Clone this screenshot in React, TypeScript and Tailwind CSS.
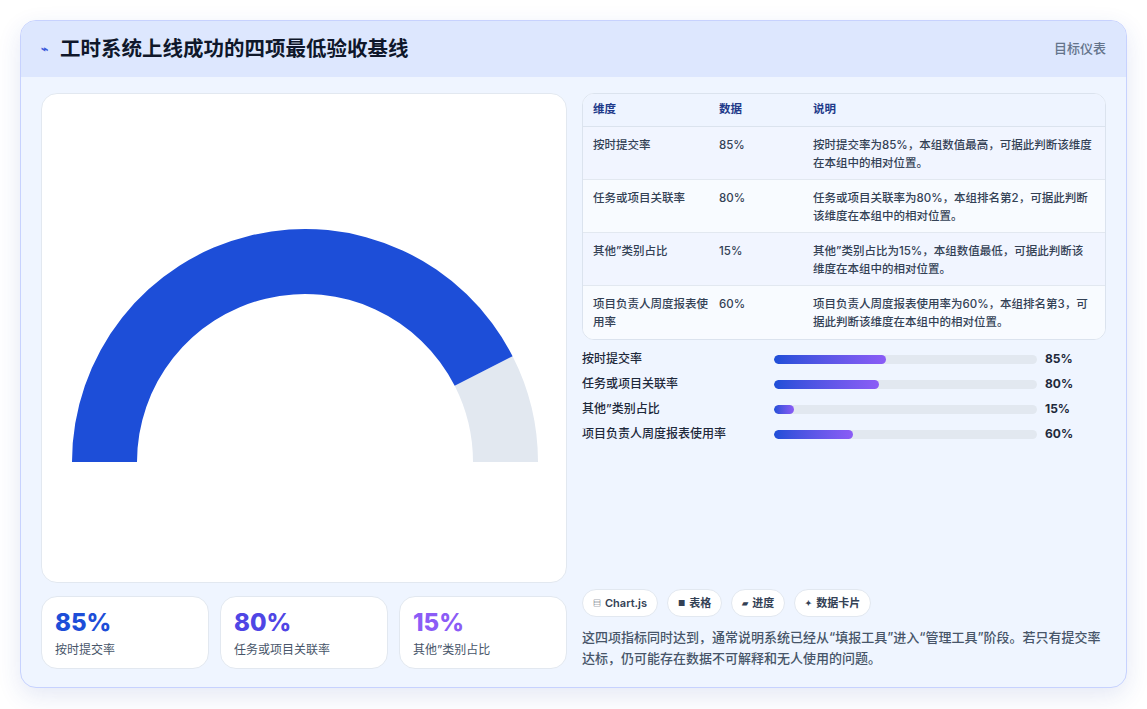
import React from "react";

const rows = [
  ["按时提交率", "85%", "按时提交率为85%，本组数值最高，可据此判断该维度在本组中的相对位置。"],
  ["任务或项目关联率", "80%", "任务或项目关联率为80%，本组排名第2，可据此判断该维度在本组中的相对位置。"],
  ["其他”类别占比", "15%", "其他”类别占比为15%，本组数值最低，可据此判断该维度在本组中的相对位置。"],
  ["项目负责人周度报表使用率", "60%", "项目负责人周度报表使用率为60%，本组排名第3，可据此判断该维度在本组中的相对位置。"],
];
const bars: [string, number][] = [
  ["按时提交率", 85],
  ["任务或项目关联率", 80],
  ["其他”类别占比", 15],
  ["项目负责人周度报表使用率", 60],
];

function Gauge() {
  const cx = 263, cy = 368, R = 233, r = 168;
  const pt = (rad: number, f: number) => {
    const a = Math.PI - f * Math.PI;
    return [cx + rad * Math.cos(a), cy - rad * Math.sin(a)];
  };
  const arc = (f0: number, f1: number) => {
    const [x0, y0] = pt(R, f0), [x1, y1] = pt(R, f1), [x2, y2] = pt(r, f1), [x3, y3] = pt(r, f0);
    return `M${x0} ${y0} A${R} ${R} 0 0 1 ${x1} ${y1} L${x2} ${y2} A${r} ${r} 0 0 0 ${x3} ${y3} Z`;
  };
  return (
    <svg width="526" height="488" viewBox="0 0 526 488">
      <path d={arc(0.85, 1)} fill="#e2e8f0" />
      <path d={arc(0, 0.85)} fill="#1d4ed8" />
    </svg>
  );
}

export default function App() {
  return (
    <div className="w-[1147px] h-[709px] bg-white p-5" style={{ fontFamily: "Inter, 'Noto Sans CJK SC', sans-serif" }}>
      <div className="h-[668px] rounded-2xl border border-[#c7d2fe] bg-[#eff5ff] shadow-[0_8px_24px_rgba(30,64,175,0.12)] overflow-hidden flex flex-col">
        <div className="h-[56px] shrink-0 bg-[#dde7fe] flex items-center justify-between px-5">
          <div className="flex items-center gap-3">
            <span className="text-[#3b5bdb] text-[12px] font-bold">⌁</span>
            <span className="text-[20.5px] font-bold text-[#0f172a]">工时系统上线成功的四项最低验收基线</span>
          </div>
          <span className="text-[13px] text-[#64748b] font-medium">目标仪表</span>
        </div>
        <div className="flex-1 flex gap-[15px] px-5 pt-4 pb-5">
          <div className="w-[526px] flex flex-col gap-[13px]">
            <div className="h-[490px] rounded-2xl bg-white border border-[#e2e8f0]">
              <Gauge />
            </div>
            <div className="flex gap-[11px]">
              {[["85%", "text-[#1d4ed8]", "按时提交率"], ["80%", "text-[#4f46e5]", "任务或项目关联率"], ["15%", "text-[#8b5cf6]", "其他”类别占比"]].map(([v, c, l]) => (
                <div key={v} className="flex-1 h-[73px] rounded-2xl bg-white border border-[#e2e8f0] px-[13px] pt-[10px]">
                  <div className={`text-[24px] font-extrabold leading-[32px] ${c}`}>{v}</div>
                  <div className="text-[12px] text-[#475569] mt-[2px]">{l}</div>
                </div>
              ))}
            </div>
          </div>
          <div className="flex-1 flex flex-col justify-between">
            <div>
              <div className="rounded-xl border border-[#dbe3ee] overflow-hidden bg-white text-[11.5px]">
                <div className="flex h-[33px] items-center bg-[#eef4ff] text-[#1e3a8a] font-bold border-b border-[#dbe3ee]">
                  <div className="w-[136px] pl-[10px]">维度</div>
                  <div className="w-[94px]">数据</div>
                  <div className="flex-1">说明</div>
                </div>
                {rows.map((r, i) => (
                  <div key={i} className={`flex h-[53px] pt-[9px] font-medium text-[#334155] leading-[18px] ${i < 3 ? "border-b border-[#e2e8f0]" : ""} ${i % 2 === 0 ? "bg-[#f1f5ff]" : "bg-[#f8fbff]"}`}>
                    <div className="w-[136px] pl-[10px] pr-2">{r[0]}</div>
                    <div className="w-[94px]">{r[1]}</div>
                    <div className="flex-1 pr-3">{r[2]}</div>
                  </div>
                ))}
              </div>
              <div className="mt-[10px] flex flex-col gap-[7px]">
                {bars.map(([l, v]) => (
                  <div key={l} className="flex items-center h-[18px] text-[12px]">
                    <div className="w-[192px] font-medium text-[#1e293b]">{l}</div>
                    <div className="w-[263px] h-[9px] rounded-full bg-[#e2e8f0] overflow-hidden">
                      <div className="h-full rounded-full bg-gradient-to-r from-[#1d4ed8] to-[#8b5cf6]" style={{ width: `${v / 2}%` }} />
                    </div>
                    <div className="ml-2 font-bold text-[#1e293b]">{v}%</div>
                  </div>
                ))}
              </div>
            </div>
            <div>
              <div className="flex gap-[9px]">
                {[["▤", "Chart.js"], ["■", "表格"], ["▰", "进度"], ["✦", "数据卡片"]].map(([ic, t]) => (
                  <div key={t} className="h-[28px] px-[10px] rounded-full bg-white border border-[#e2e8f0] flex items-center gap-1 text-[11px] font-semibold text-[#334155]">
                    <span className="text-[8px]">{ic}</span>{t}
                  </div>
                ))}
              </div>
              <p className="mt-[10px] text-[13px] font-medium leading-[21px] text-[#475569]">这四项指标同时达到，通常说明系统已经从“填报工具”进入“管理工具”阶段。若只有提交率达标，仍可能存在数据不可解释和无人使用的问题。</p>
            </div>
          </div>
        </div>
      </div>
    </div>
  );
}
